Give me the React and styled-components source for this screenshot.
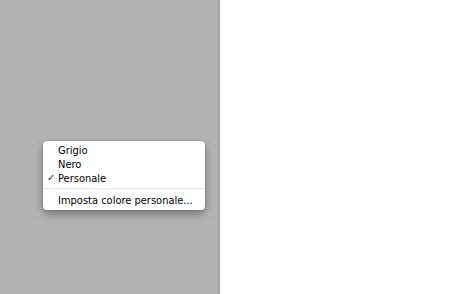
import React from "react";
import styled, { createGlobalStyle } from "styled-components";

const Global = createGlobalStyle`
  html, body {
    margin: 0;
    height: 100%;
    background: #ffffff;
  }
  #root {
    height: 100%;
  }
`;

const Page = styled.div`
  display: flex;
  width: 460px;
  height: 294px;
  overflow: hidden;
`;

const Sidebar = styled.div`
  width: 220px;
  height: 100%;
  background: #b3b3b3;
  border-right: 2px solid #a6a6a6;
  padding: 141px 0 0 43px;
  box-sizing: border-box;
`;

const Menu = styled.div`
  width: 162px;
  background: #ffffff;
  border-radius: 4px;
  padding: 2px 0 3px;
  box-shadow: 0 4px 10px rgba(0, 0, 0, 0.35), 0 0 0 1px rgba(0, 0, 0, 0.08);
  font-family: "DejaVu Sans Condensed", "DejaVu Sans", sans-serif;
  font-size: 11px;
  color: #000000;
`;

const Item = styled.div`
  display: flex;
  align-items: center;
  height: 14px;
  padding-left: 15px;
  white-space: nowrap;
  position: relative;
`;

const Check = styled.span`
  position: absolute;
  left: 4px;
  top: 0;
  font-family: "DejaVu Sans", sans-serif;
  font-size: 10px;
  line-height: 14px;
  color: #333;
`;

const Separator = styled.div`
  height: 1px;
  background: #e3e3e3;
  margin: 3px 0 4px;
`;

export default function App() {
  return (
    <Page>
      <Global />
      <Sidebar>
        <Menu>
          <Item>Grigio</Item>
          <Item>Nero</Item>
          <Item>
            <Check>✓</Check>
            Personale
          </Item>
          <Separator />
          <Item>Imposta colore personale...</Item>
        </Menu>
      </Sidebar>
    </Page>
  );
}
